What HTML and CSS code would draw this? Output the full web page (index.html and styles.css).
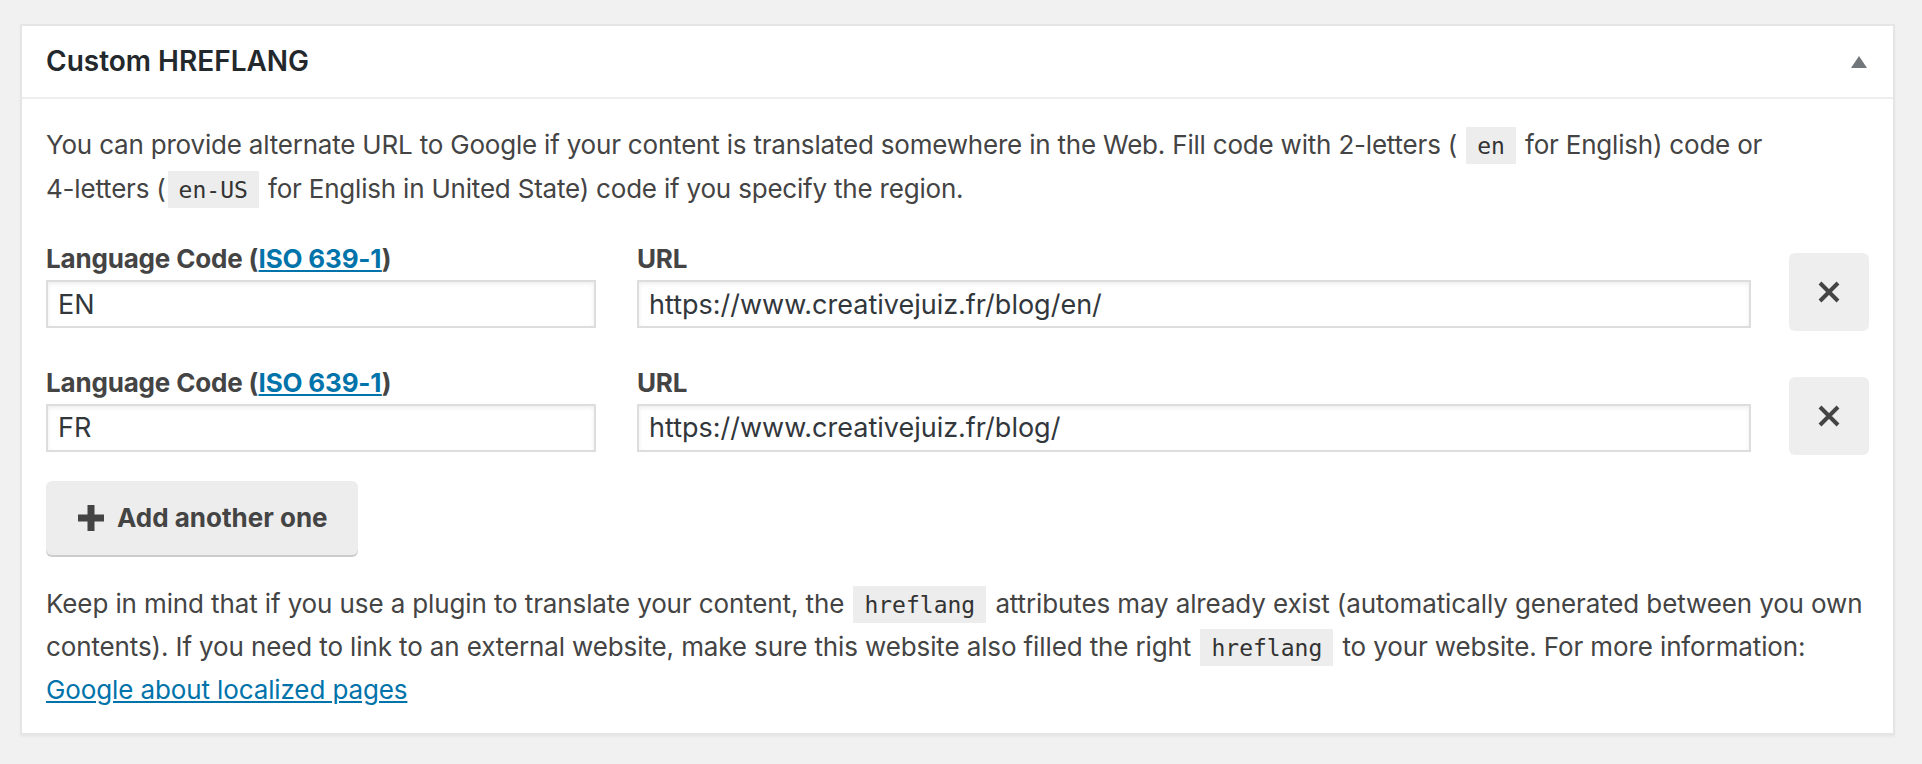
FILE: index.html
```html
<!DOCTYPE html>
<html lang="en">
<head>
<meta charset="utf-8">
<title>Custom HREFLANG</title>
<link rel="stylesheet" href="styles.css">
</head>
<body>
<div class="postbox">
  <h2 class="hndle">
    <span>Custom HREFLANG</span>
    <svg class="toggle" width="16" height="12" viewBox="0 0 16 12"><polygon points="8,0 16,12 0,12" fill="#72777c"/></svg>
  </h2>
  <div class="inside">
    <p class="intro">You can provide alternate URL to Google if your content is translated somewhere in the Web. Fill code with <span class="nowrap">2-letters</span> ( <code>en</code> for English) code or <span class="nowrap">4-letters</span> (<code>en-US</code> for English in United State) code if you specify the region.</p>

    <div class="hl-row">
      <div class="field field-code">
        <label class="field-label">Language Code (<a href="#">ISO 639-1</a>)</label>
        <input class="field-input" type="text" value="EN">
      </div>
      <div class="field field-url">
        <label class="field-label">URL</label>
        <input class="field-input" type="text" value="https://www.creativejuiz.fr/blog/en/">
      </div>
      <button class="remove" type="button" aria-label="Remove">
        <svg width="24" height="24" viewBox="0 0 24 24"><path d="M3 3 L21 21 M21 3 L3 21" stroke="#444" stroke-width="4" fill="none"/></svg>
      </button>
    </div>

    <div class="hl-row">
      <div class="field field-code">
        <label class="field-label">Language Code (<a href="#">ISO 639-1</a>)</label>
        <input class="field-input" type="text" value="FR">
      </div>
      <div class="field field-url">
        <label class="field-label">URL</label>
        <input class="field-input" type="text" value="https://www.creativejuiz.fr/blog/">
      </div>
      <button class="remove" type="button" aria-label="Remove">
        <svg width="24" height="24" viewBox="0 0 24 24"><path d="M3 3 L21 21 M21 3 L3 21" stroke="#444" stroke-width="4" fill="none"/></svg>
      </button>
    </div>

    <button class="add" type="button">
      <svg width="26" height="26" viewBox="0 0 26 26"><path d="M9.5 0h7v9.5H26v7h-9.5V26h-7v-9.5H0v-7h9.5z" fill="#444"/></svg>
      <span>Add another one</span>
    </button>

    <p class="note">Keep in mind that if you use a plugin to translate your content, the <code>hreflang</code> attributes may already exist (automatically generated between you own contents). If you need to link to an external website, make sure this website also filled the right <code>hreflang</code> to your website. For more information: <a href="#">Google about localized pages</a></p>
  </div>
</div>
</body>
</html>
```

FILE: styles.css
```css
html, body {
  margin: 0;
}
body {
  background: #f1f1f1;
  padding: 24px 27px 32px 20px;
  font-family: Inter, "Noto Sans", sans-serif;
  color: #444;
  font-size: 26px;
}
.postbox {
  background: #fff;
  border: 2px solid #e5e5e5;
  box-shadow: 0 2px 2px rgba(0, 0, 0, 0.04);
}
.hndle {
  margin: 0;
  display: flex;
  align-items: center;
  justify-content: space-between;
  padding: 16px 26px 16px 24px;
  border-bottom: 2px solid #eee;
  font-size: 28px;
  line-height: 39px;
  font-weight: 600;
  color: #23282d;
}
.toggle {
  display: block;
}
.inside {
  padding: 24px 24px 22px;
}
p {
  margin: 0;
}
.intro {
  line-height: 44px;
  margin-bottom: 30px;
  letter-spacing: -0.2px;
}
.note {
  line-height: 43px;
  letter-spacing: -0.12px;
}
.nowrap {
  white-space: nowrap;
}
code {
  font-family: "DejaVu Sans Mono", monospace;
  font-size: 23px;
  line-height: 1;
  letter-spacing: 0;
  background: rgba(0, 0, 0, 0.07);
  padding: 6px 11px 5px;
  margin: 0 2px;
  color: #333;
}
a {
  color: #0073aa;
  text-decoration: underline;
}
.hl-row {
  display: flex;
  align-items: flex-end;
  gap: 41px;
  margin-bottom: 33.5px;
}
.hl-row + .hl-row {
  margin-bottom: 0;
}
.field {
  display: flex;
  flex-direction: column;
  margin-bottom: 3px;
}
.field-code {
  width: 550px;
}
.field-url {
  flex: 1;
  margin-right: -3px;
}
.field-label {
  font-weight: 700;
  line-height: 36px;
  margin-bottom: 3px;
  letter-spacing: -0.18px;
}
.field-input {
  box-sizing: border-box;
  height: 48px;
  width: 100%;
  border: 2px solid #ddd;
  box-shadow: inset 0 2px 4px rgba(0, 0, 0, 0.07);
  background: #fff;
  padding: 0 10px;
  font-family: Inter, "Noto Sans", sans-serif;
  font-size: 27px;
  color: #32373c;
  outline: none;
}
.remove {
  box-sizing: border-box;
  width: 80px;
  height: 78px;
  flex: none;
  border: none;
  border-radius: 6px;
  background: #eee;
  display: flex;
  align-items: center;
  justify-content: center;
  padding: 0;
}
.add {
  box-sizing: border-box;
  display: flex;
  align-items: center;
  gap: 13px;
  height: 74px;
  padding: 0 30px 0 32px;
  margin: 26px 0 27px;
  border: none;
  border-radius: 6px;
  background: #ededed;
  box-shadow: 0 2px 0 #ccc;
  font-family: Inter, "Noto Sans", sans-serif;
  font-size: 26px;
  font-weight: 700;
  color: #444;
}
.add svg {
  display: block;
}
```
